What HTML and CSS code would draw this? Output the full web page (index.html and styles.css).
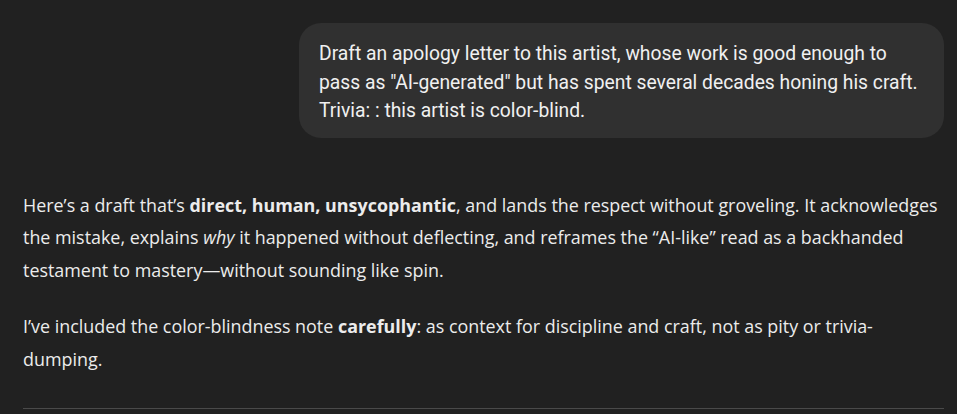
FILE: index.html
```html
<!DOCTYPE html>
<html lang="en">
<head>
<meta charset="utf-8">
<title>Chat</title>
<link rel="stylesheet" href="styles.css">
</head>
<body>
<main class="thread">
  <div class="user-row">
    <div class="bubble">Draft an apology letter to this artist, whose work is good enough to pass as "AI-generated" but has spent several decades honing his craft. Trivia: : this artist is color-blind.</div>
  </div>
  <div class="assistant">
    <p>Here’s a draft that’s <strong>direct, human, unsycophantic</strong>, and lands the respect without groveling. It acknowledges the mistake, explains <em>why</em> it happened without deflecting, and reframes the “AI-like” read as a backhanded testament to mastery—without sounding like spin.</p>
    <p>I’ve included the color-blindness note <strong>carefully</strong>: as context for discipline and craft, not as pity or trivia-dumping.</p>
  </div>
  <hr class="sep">
</main>
</body>
</html>
```
FILE: styles.css
```css
html, body {
  margin: 0;
  padding: 0;
  background: #212121;
  color: #ececec;
}
body {
  font-family: "Open Sans", "Noto Sans", sans-serif;
}
.thread {
  padding: 23px 13px 0 23px;
}
.user-row {
  display: flex;
  justify-content: flex-end;
}
.bubble {
  box-sizing: border-box;
  width: 645px;
  background: #303030;
  border-radius: 22px;
  padding: 17px 20px 12px;
  font-family: Roboto, "Noto Sans", sans-serif;
  font-size: 19.3px;
  line-height: 28.5px;
  color: #f0f0f0;
}
.assistant {
  margin-top: 51px;
  font-size: 17.9px;
  line-height: 32.5px;
}
.assistant p {
  margin: 0 0 24px;
}
.assistant strong {
  font-weight: 700;
}
.sep {
  margin: 33px 0 0;
  border: 0;
  border-top: 1px solid #4a4a4a;
}
```
